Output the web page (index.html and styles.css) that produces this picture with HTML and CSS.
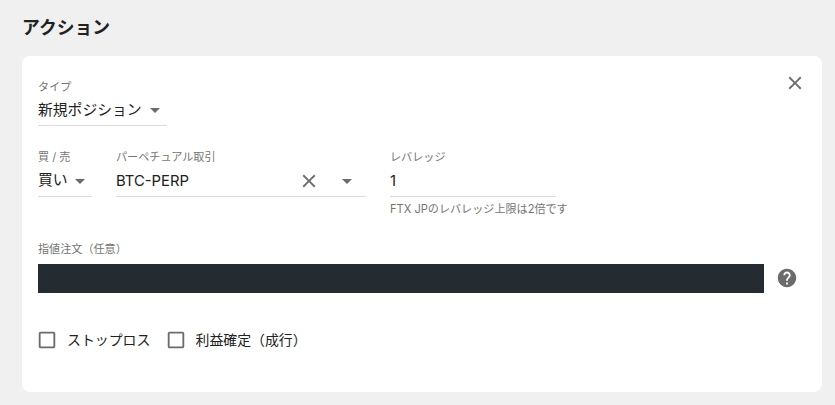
FILE: index.html
```html
<!DOCTYPE html>
<html lang="ja">
<head>
<meta charset="utf-8">
<title>アクション</title>
<link rel="stylesheet" href="styles.css">
</head>
<body>
<h1 class="title">アクション</h1>
<main class="card">
  <div class="row row-type">
    <div class="field field-type">
      <span class="label">タイプ</span>
      <div class="control"><span class="value">新規ポジション</span><svg class="arrow" viewBox="0 0 24 24"><path d="M7 10l5 5 5-5z"/></svg></div>
    </div>
    <svg class="icon close" viewBox="0 0 24 24"><path d="M19 6.41L17.59 5 12 10.59 6.41 5 5 6.41 10.59 12 5 17.59 6.41 19 12 13.41 17.59 19 19 17.59 13.41 12z"/></svg>
  </div>
  <div class="row row-order">
    <div class="field field-side">
      <span class="label">買 / 売</span>
      <div class="control"><span class="value">買い</span><svg class="arrow low" viewBox="0 0 24 24"><path d="M7 10l5 5 5-5z"/></svg></div>
    </div>
    <div class="field field-market">
      <span class="label">パーペチュアル取引</span>
      <div class="control"><span class="value latin">BTC-PERP</span><svg class="icon clear" viewBox="0 0 24 24"><path d="M19 6.41L17.59 5 12 10.59 6.41 5 5 6.41 10.59 12 5 17.59 6.41 19 12 13.41 17.59 19 19 17.59 13.41 12z"/></svg><svg class="arrow low" viewBox="0 0 24 24"><path d="M7 10l5 5 5-5z"/></svg></div>
    </div>
    <div class="field field-leverage">
      <span class="label">レバレッジ</span>
      <div class="control"><span class="value latin">1</span></div>
      <span class="helper">FTX JPのレバレッジ上限は2倍です</span>
    </div>
  </div>
  <div class="limit">
    <span class="label">指値注文（任意）</span>
    <div class="limit-line">
      <div class="bar"></div>
      <svg class="icon" viewBox="0 0 24 24"><path d="M12 2C6.48 2 2 6.48 2 12s4.48 10 10 10 10-4.48 10-10S17.52 2 12 2zm1 17h-2v-2h2v2zm2.07-7.75l-.9.92C13.45 12.9 13 13.5 13 15h-2v-.5c0-1.1.45-2.1 1.17-2.83l1.24-1.26c.37-.36.59-.86.59-1.41 0-1.1-.9-2-2-2s-2 .9-2 2H8c0-2.21 1.79-4 4-4s4 1.79 4 4c0 .88-.36 1.68-.93 2.25z"/></svg>
    </div>
  </div>
  <div class="checks">
    <div class="check check-stop"><svg class="icon" viewBox="0 0 24 24"><path d="M19 5v14H5V5h14m0-2H5c-1.1 0-2 .9-2 2v14c0 1.1.9 2 2 2h14c1.1 0 2-.9 2-2V5c0-1.1-.9-2-2-2z"/></svg><span>ストップロス</span></div>
    <div class="check"><svg class="icon" viewBox="0 0 24 24"><path d="M19 5v14H5V5h14m0-2H5c-1.1 0-2 .9-2 2v14c0 1.1.9 2 2 2h14c1.1 0 2-.9 2-2V5c0-1.1-.9-2-2-2z"/></svg><span>利益確定（成行）</span></div>
  </div>
</main>
</body>
</html>
```
FILE: styles.css
```css
* { box-sizing: border-box; }
body {
  margin: 0;
  height: 405px;
  padding: 16px 13px 0 22px;
  background: #f0f0f0;
  color: #212121;
  font-family: Inter, "Noto Sans CJK JP", sans-serif;
  overflow: hidden;
}
.title {
  margin: 0 0 16px;
  height: 24px;
  font-size: 17.8px;
  line-height: 24px;
  font-weight: 700;
}
.card {
  height: 336px;
  padding: 24px 16px 0;
  background: #fff;
  border-radius: 8px;
}
svg { display: block; flex: none; fill: #6b6b6b; }
.icon { width: 22px; height: 22px; }
.arrow { width: 24px; height: 24px; }
.low { margin-top: 2px; }
.row { display: flex; }
.row-type { height: 70px; justify-content: space-between; }
.row-order { height: 92px; gap: 24px; }
.field { display: flex; flex-direction: column; }
.field-type { width: 129px; }
.field-side { width: 54px; }
.field-market { width: 250px; }
.field-leverage { width: 166px; }
.label, .helper {
  display: block;
  height: 14px;
  font-size: 11.1px;
  line-height: 14px;
  color: #757575;
  white-space: nowrap;
}
.control {
  display: flex;
  align-items: center;
  height: 33px;
  border-bottom: 1px solid #dcdcdc;
}
.field-type .control { height: 32px; }
.value { font-size: 14.8px; line-height: 22px; white-space: nowrap; }
.field-type .arrow { margin-left: 1px; }
.field-side .value { margin-right: 0.5px; }
.latin { margin-top: 2px; }
.clear { margin: 2px 15px 0 auto; }
.field-market .arrow { margin-right: 7px; }
.close { margin-top: -8px; }
.helper { margin-top: 5px; }
.limit-line { display: flex; margin-top: 8px; gap: 12px; }
.limit-line .icon { margin: 3px -2px 0 0; }
.bar { width: 726px; height: 29px; background: #242c32; }
.checks { display: flex; margin-top: 36px; margin-left: -2px; }
.check {
  display: flex;
  align-items: center;
  height: 22px;
  gap: 9px;
  font-size: 13.9px;
  line-height: 20px;
  white-space: nowrap;
}
.check-stop { width: 128.5px; }
```
